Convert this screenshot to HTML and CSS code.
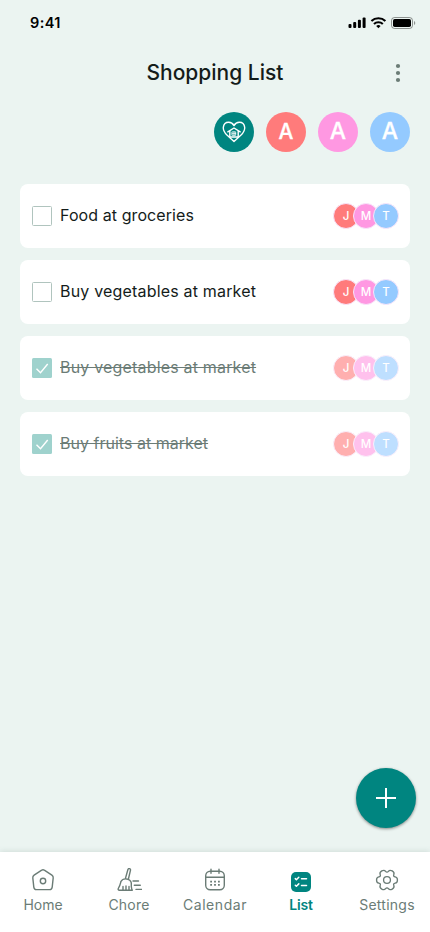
FILE: index.html
```html
<!DOCTYPE html>
<html lang="en">
<head>
<meta charset="utf-8">
<meta name="viewport" content="width=device-width, initial-scale=1">
<title>Shopping List</title>
<link rel="stylesheet" href="styles.css">
</head>
<body>
<div class="app">
  <div class="status">
    <span class="time">9:41</span>
    <svg class="status-icons" width="68" height="14" viewBox="0 0 68 14">
      <rect x="0.5" y="8" width="3" height="4" rx="1"/>
      <rect x="5.2" y="6" width="3" height="6" rx="1"/>
      <rect x="9.9" y="3.7" width="3" height="8.3" rx="1"/>
      <rect x="14.6" y="1.5" width="3" height="10.5" rx="1"/>
      <g fill="none" stroke="#000" stroke-width="2.1"><path d="M23.4 5.1a10.2 10.2 0 0 1 14 0"/><path d="M26 8a6.3 6.3 0 0 1 8.800 0"/></g>
      <path d="M28.200 10a3.200 3.200 0 0 1 4.400 0L30.400 12.300z"/>
      <rect x="43.500" y="1.500" width="21" height="11" rx="3" fill="none" stroke="#000" stroke-opacity=".4"/>
      <rect x="45" y="3" width="18" height="8" rx="1.700"/>
      <path d="M66 5v4a2.200 2.200 0 0 0 0-4z" opacity=".4"/>
    </svg>
  </div>
  <header class="header">
    <h1 class="title">Shopping List</h1>
    <svg class="more" width="6" height="20" viewBox="0 0 6 20"><circle cx="3" cy="3" r="2.100"/><circle cx="3" cy="10" r="2.100"/><circle cx="3" cy="17" r="2.100"/></svg>
  </header>
  <div class="members">
    <span class="member teal">
      <svg width="24" height="22" viewBox="0 0 24 22" fill="none" stroke="#fff" stroke-width="1.400" stroke-linecap="round" stroke-linejoin="round">
        <path d="M5.200 14.300C2.500 11.700 1 9.300 1.300 6.400 1.700 3.100 4 1.300 6.700 1.300c2.300 0 4.200 1.300 5.300 3.300 1.100-2 3-3.300 5.300-3.300 2.700 0 5 1.800 5.400 5.100.3 2.900-1.200 5.300-3.900 7.900L12 20.400z"/>
        <path d="M5.800 10.800 12 7l6.200 3.800M7.800 10v6h8.400v-6"/>
        <path stroke-width=".8" d="M10.300 10.900h3.400v3.400h-3.400zM12 10.900v3.400M10.300 12.600h3.400"/>
      </svg>
    </span>
    <span class="member coral">A</span>
    <span class="member pink large">A</span>
    <span class="member blue large">A</span>
  </div>
  <main class="list">
    <div class="item"><span class="box"></span><span class="label food">Food at groceries</span><span class="people"><i class="coral">J</i><i class="pink">M</i><i class="blue">T</i></span></div>
    <div class="item"><span class="box"></span><span class="label">Buy vegetables at market</span><span class="people"><i class="coral">J</i><i class="pink">M</i><i class="blue">T</i></span></div>
    <div class="item done"><span class="box"><svg width="20" height="20" viewBox="0 0 20 20"><path d="M4.500 10.700 8.500 14.700 15.700 6"/></svg></span><span class="label">Buy vegetables at market</span><span class="people"><i class="coral">J</i><i class="pink">M</i><i class="blue">T</i></span></div>
    <div class="item done"><span class="box"><svg width="20" height="20" viewBox="0 0 20 20"><path d="M4.500 10.700 8.500 14.700 15.700 6"/></svg></span><span class="label fruits">Buy fruits at market</span><span class="people"><i class="coral">J</i><i class="pink">M</i><i class="blue">T</i></span></div>
  </main>
  <button class="add" aria-label="Add"><svg width="20" height="20" viewBox="0 0 20 20"><path d="M10 0v20M0 10h20"/></svg></button>
  <nav class="nav">
    <a class="tab">
      <svg width="26" height="24" viewBox="0 0 26 24"><path d="M11.700 2.200q1.300-.9 2.600 0l7.600 5q1.500 1 1.300 2.700l-1 9.200q-.3 2.500-2.600 2.500H6.400q-2.300 0-2.600-2.500l-1-9.200Q2.600 8.200 4.100 7.200z"/><circle cx="13" cy="13" r="2.700"/></svg>
      <span class="home">Home</span>
    </a>
    <a class="tab">
      <svg width="26" height="24" viewBox="0 0 26 24"><path d="M9.300 10.900 12 1.300q.5-1 1.500-.7 1.200.3 1 1.500L12.300 11.500M4.800 13.700q2-3.300 5.800-2.700 3.900.5 4.700 3.900v3.600q.3 2.500 1 3.700H3.100q-1.300-.3-.8-1.700 1.800-3 2.500-6.300zM7 22v-3.500M10 22v-4M13 22v-3.500M17 13h5.500M18.300 17.200h6M20 21.400h5.500"/></svg>
      <span class="chore">Chore</span>
    </a>
    <a class="tab">
      <svg width="26" height="24" viewBox="0 0 26 24"><rect x="3.700" y="3.300" width="18.600" height="18.500" rx="4.500"/><path d="M3.700 9.200h18.600M9 1.200v4M17 1.200v4"/><path class="dots" d="M8.200 13.700h1.800M12.100 13.700h1.800M16 13.700h1.800M8.200 16.900h1.800M12.100 16.900h1.800M16 16.900h1.800"/></svg>
      <span class="calendar">Calendar</span>
    </a>
    <a class="tab active">
      <svg width="26" height="24" viewBox="0 0 26 24"><rect class="tile" x="3" y="4" width="20" height="20" rx="5"/><path class="marks" d="m7.300 10.600 1.100 1.100 2.400-2.400M13.500 10.800h5M7.300 17.200l1.100 1.100 2.400-2.400M13.500 17.400h5"/></svg>
      <span class="list-tab">List</span>
    </a>
    <a class="tab">
      <svg width="26" height="24" viewBox="0 0 26 24"><g transform="translate(13 12) scale(.95)"><path d="M11 0Q11 2.950 8.660 3.300 6.320 3.650 7.190 5.860 8.060 8.060 5.500 9.530 2.950 11 1.480 9.150 0 7.300-1.480 9.150-2.950 11-5.500 9.530-8.060 8.060-7.190 5.860-6.320 3.650-8.660 3.300-11 2.950-11 0-11-2.950-8.660-3.300-6.320-3.650-7.190-5.860-8.060-8.060-5.500-9.530-2.950-11-1.480-9.150 0-7.300 1.480-9.150 2.950-11 5.500-9.530 8.060-8.060 7.190-5.860 6.320-3.650 8.660-3.300 11-2.950 11 0z"/><circle r="3.600"/></g></svg>
      <span class="settings">Settings</span>
    </a>
  </nav>
</div>
</body>
</html>
```
FILE: styles.css
```css
* { box-sizing: border-box; }
body { margin: 0; font-family: Inter, "Liberation Sans", sans-serif; color: #141c1a; }
svg { display: block; flex: none; }
.app { width: 430px; height: 932px; display: flex; flex-direction: column; background: #ebf4f1; overflow: hidden; }
.status { height: 46px; display: flex; align-items: center; justify-content: space-between; padding: 0 14px 0 30px; }
.time { font-size: 14.5px; font-weight: 600; letter-spacing: .4px; color: #000; padding-bottom: 2px; }
.header { height: 54px; display: grid; grid-template-columns: 1fr auto 1fr; align-items: center; padding: 0 29px; }
.title { grid-column: 2; margin: 0; padding-bottom: 2px; font-size: 21px; font-weight: 500; }
.more { justify-self: end; fill: #6b7c76; }
.members { display: flex; justify-content: flex-end; gap: 12px; padding: 12px 20px 0; }
.member { width: 40px; height: 40px; padding-bottom: 1px; border-radius: 50%; display: flex; align-items: center; justify-content: center; color: #fff; font-size: 21px; font-weight: 500; -webkit-text-stroke: .3px #fff; }
.member.teal { padding: 0; }
.member.large { font-size: 23px; padding-bottom: 2px; }
.teal { background: #008580; }
.coral { background: #ff7b7b; }
.pink { background: #ff98e2; }
.blue { background: #94caff; }
.list { flex: 1; display: flex; flex-direction: column; gap: 12px; padding: 32px 20px 0; }
.item { height: 64px; display: flex; align-items: center; gap: 8px; padding: 0 11px 0 12px; border-radius: 8px; background: #fff; }
.box { width: 20px; height: 20px; border: 1px solid #b0c4be; border-radius: 1.5px; }
.label { font-size: 16px; line-height: 20px; letter-spacing: .18px; padding-bottom: 3px; white-space: nowrap; }
.label.food { letter-spacing: .08px; }
.label.fruits { letter-spacing: .02px; }
.people { display: flex; margin-left: auto; }
.people i { width: 26px; height: 26px; border: 1px solid #f8e5fa; border-radius: 50%; margin-left: -6px; display: flex; align-items: center; justify-content: center; color: #fff; font-size: 11.5px; font-style: normal; font-weight: 500; }
.done .box { border: 0; background: #9fd2cd; }
.done .box path { fill: none; stroke: #fff; stroke-width: 1.4; }
.done .label { color: #6b7c76; text-decoration: line-through; text-decoration-thickness: 1px; }
.done .people { opacity: .6; }
.add { align-self: flex-end; width: 60px; height: 60px; margin: 0 14px 24px 0; padding: 0; border: 0; border-radius: 50%; background: #008580; display: flex; align-items: center; justify-content: center; box-shadow: 0 1px 3px rgba(0, 0, 0, .45); }
.add path { stroke: #fff; stroke-width: 2; }
.nav { height: 80px; display: flex; background: #fff; box-shadow: 0 0 6px rgba(70, 100, 90, .2); }
.tab { width: 86px; display: flex; flex-direction: column; align-items: center; padding-top: 16px; color: #6b7c76; font-size: 14px; line-height: 18px; }
.tab span { margin-top: 4px; }
.calendar { letter-spacing: .55px; }
.chore { letter-spacing: .2px; }
.settings { letter-spacing: .25px; }
.tab svg { fill: none; stroke: currentColor; stroke-width: 1.4; stroke-linecap: round; stroke-linejoin: round; }
.tab .dots { stroke-width: 1.8; stroke-linecap: butt; }
.active { color: #008580; font-weight: 600; }
.list-tab { letter-spacing: -.2px; }
.tab .tile { fill: #008580; stroke: none; }
.tab .marks { stroke: #fff; stroke-width: 1.5; }
```
